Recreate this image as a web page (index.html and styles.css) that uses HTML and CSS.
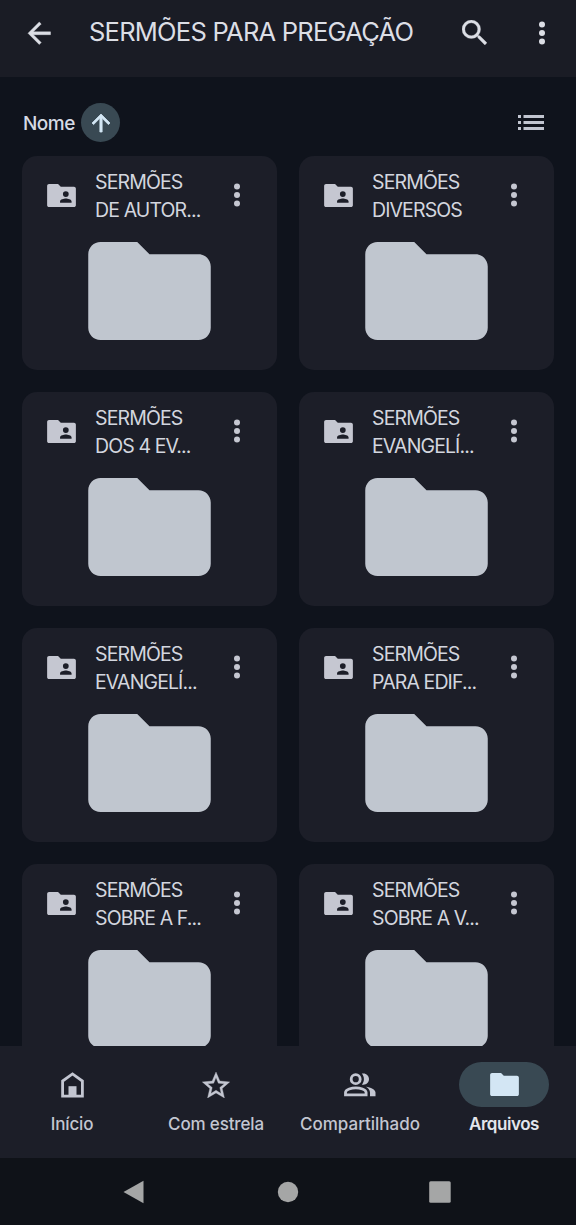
FILE: index.html
```
<!DOCTYPE html>
<html lang="pt-BR">
<head>
<meta charset="utf-8">
<title>Sermões para pregação</title>
<link rel="stylesheet" href="styles.css">
</head>
<body>
<svg class="defs" width="0" height="0" aria-hidden="true">
  <symbol id="folder" viewBox="2 4 20 16"><path d="M10 4H4C2.9 4 2 4.9 2 6v12c0 1.1.9 2 2 2h16c1.1 0 2-.9 2-2V8c0-1.1-.9-2-2-2h-8z"/></symbol>
  <symbol id="shared" viewBox="2 4 20 16"><path fill-rule="evenodd" d="M9.6 4H3.3C2.6 4 2 4.6 2 5.3v13.4c0 .7.6 1.3 1.3 1.3h17.4c.7 0 1.3-.6 1.3-1.3V7.2c0-.7-.6-1.3-1.3-1.3h-9.2zM15 9a2 2 0 1 1 0 4 2 2 0 0 1 0-4zm4 8h-8v-1c0-1.33 2.67-2 4-2s4 .67 4 2z"/></symbol>
  <symbol id="dots" viewBox="0 0 8 24"><circle cx="4" cy="3.5" r="3"/><circle cx="4" cy="12" r="3"/><circle cx="4" cy="20.5" r="3"/></symbol>
</svg>
<div class="app">
  <header class="topbar">
    <svg class="back" viewBox="4 4 16 16"><path d="M20 11H7.83l5.59-5.59L12 4l-8 8 8 8 1.41-1.41L7.83 13H20z"/></svg>
    <h1 class="title">SERMÕES PARA PREGAÇÃO</h1>
    <svg class="search" viewBox="3 3 17.5 17.5"><path d="M15.5 14h-.79l-.28-.27A6.47 6.47 0 0 0 16 9.5 6.5 6.5 0 1 0 9.5 16c1.61 0 3.09-.59 4.23-1.57l.27.28v.79l5 4.99L20.49 19zm-6 0a4.5 4.5 0 1 1 0-9 4.5 4.5 0 0 1 0 9z"/></svg>
    <svg class="dots"><use href="#dots"/></svg>
  </header>
  <main class="content">
    <div class="sort">
      <span class="sort-label">Nome</span>
      <span class="sort-button"><svg class="up" viewBox="4 4 16 16"><path d="m4 12 1.41 1.41L11 7.83V20h2V7.83l5.58 5.59L20 12l-8-8z"/></svg></span>
      <svg class="list" viewBox="0 0 26 15"><path d="M0 0h3v3H0zM5.5 0H26v3H5.5zM0 6h3v3H0zM5.5 6H26v3H5.5zM0 12h3v3H0zM5.5 12H26v3H5.5z"/></svg>
    </div>
    <div class="grid">
      <article class="card"><div class="card-head"><svg class="shared"><use href="#shared"/></svg><p class="name">SERMÕES<br>DE AUTOR...</p><svg class="dots"><use href="#dots"/></svg></div><svg class="folder"><use href="#folder"/></svg></article>
      <article class="card"><div class="card-head"><svg class="shared"><use href="#shared"/></svg><p class="name">SERMÕES<br>DIVERSOS</p><svg class="dots"><use href="#dots"/></svg></div><svg class="folder"><use href="#folder"/></svg></article>
      <article class="card"><div class="card-head"><svg class="shared"><use href="#shared"/></svg><p class="name">SERMÕES<br>DOS 4 EV...</p><svg class="dots"><use href="#dots"/></svg></div><svg class="folder"><use href="#folder"/></svg></article>
      <article class="card"><div class="card-head"><svg class="shared"><use href="#shared"/></svg><p class="name">SERMÕES<br>EVANGELÍ...</p><svg class="dots"><use href="#dots"/></svg></div><svg class="folder"><use href="#folder"/></svg></article>
      <article class="card"><div class="card-head"><svg class="shared"><use href="#shared"/></svg><p class="name">SERMÕES<br>EVANGELÍ...</p><svg class="dots"><use href="#dots"/></svg></div><svg class="folder"><use href="#folder"/></svg></article>
      <article class="card"><div class="card-head"><svg class="shared"><use href="#shared"/></svg><p class="name">SERMÕES<br>PARA EDIF...</p><svg class="dots"><use href="#dots"/></svg></div><svg class="folder"><use href="#folder"/></svg></article>
      <article class="card"><div class="card-head"><svg class="shared"><use href="#shared"/></svg><p class="name">SERMÕES<br>SOBRE A F...</p><svg class="dots"><use href="#dots"/></svg></div><svg class="folder"><use href="#folder"/></svg></article>
      <article class="card"><div class="card-head"><svg class="shared"><use href="#shared"/></svg><p class="name">SERMÕES<br>SOBRE A V...</p><svg class="dots"><use href="#dots"/></svg></div><svg class="folder"><use href="#folder"/></svg></article>
    </div>
  </main>
  <nav class="tabs">
    <a class="tab"><span class="pill"><svg class="home" viewBox="0 0 23 26"><path d="M1.6 24.2V9L11.5 1.9 21.4 9v15.2z" fill="none" stroke="currentColor" stroke-width="2.8"/><path d="M7.5 14.2h8V25h-8z"/></svg></span><span class="tab-label">Início</span></a>
    <a class="tab"><span class="pill"><svg class="star" viewBox="2 2 20 19"><path stroke="currentColor" stroke-width=".25" d="m22 9.24-7.19-.62L12 2 9.19 8.63 2 9.24l5.46 4.73L5.82 21 12 17.27 18.18 21l-1.63-7.03zM12 15.4l-3.76 2.27 1-4.28-3.32-2.88 4.38-.38L12 6.1l1.71 4.04 4.38.38-3.32 2.88 1 4.28z"/></svg></span><span class="tab-label">Com estrela</span></a>
    <a class="tab"><span class="pill"><svg class="people" viewBox="0 0 32 24"><g fill="none" stroke="currentColor" stroke-width="2.8"><circle cx="11.7" cy="6.2" r="4.5"/><path d="M1.5 21.9v-2.3c0-3.2 6.4-4.7 10.3-4.7s10.3 1.5 10.3 4.7v2.3z"/></g><path d="M17.8 11.5c2.8-3.1 2.8-7.6 0-10.9 4-.9 7.2 1.8 7.2 5.5s-3.2 6.4-7.2 5.4zM21.8 13.7c4.9.6 9.7 2.6 9.7 5.9v3.7H26v-3.7c0-2.5-1.7-4.6-4.2-5.9z"/></svg></span><span class="tab-label wide">Compartilhado</span></a>
    <a class="tab active"><span class="pill"><svg class="files" viewBox="2 4 20 16"><path d="M9.6 4H3.3C2.6 4 2 4.6 2 5.3v13.4c0 .7.6 1.3 1.3 1.3h17.4c.7 0 1.3-.6 1.3-1.3V7.2c0-.7-.6-1.3-1.3-1.3h-9.2z"/></svg></span><span class="tab-label">Arquivos</span></a>
  </nav>
  <footer class="system">
    <svg class="sys" viewBox="0 0 22 24"><path d="M.5 12 20.5.7v22.6z"/></svg>
    <svg class="sys" viewBox="0 0 22 24"><circle cx="11" cy="12" r="10.2"/></svg>
    <svg class="sys" viewBox="0 0 22 24"><rect x=".2" y="1.3" width="21.5" height="21.5" rx="1.5"/></svg>
  </footer>
</div>
</body>
</html>
```
FILE: styles.css
```
* { box-sizing: border-box; }
body { margin: 0; background: #0f131c; font-family: Inter, "Liberation Sans", sans-serif; }
svg { display: block; fill: currentColor; flex: none; }
.defs { position: absolute; }
.app { width: 576px; height: 1225px; display: flex; flex-direction: column; overflow: hidden; color: #dcdee5; }

.topbar { height: 77px; flex: none; display: flex; align-items: flex-start; padding: 20px 30px 0 28px; background: #1a1c25; }
.back { width: 22.5px; height: 22.5px; margin-top: 2px; stroke: currentColor; stroke-width: .3; overflow: visible; }
.title { margin: -5px 0 0 38.5px; width: 373px; font-size: 25.5px; line-height: 34px; font-weight: 400; letter-spacing: -.76px; white-space: nowrap; }
.search { width: 25px; height: 25px; stroke: currentColor; stroke-width: .2; }
.topbar .dots { margin: 1px 0 0 51px; }
.dots { width: 8px; height: 24px; }

.content { height: 969px; flex: none; padding: 26px 22px 0; overflow: hidden; }
.sort { height: 40px; display: flex; align-items: center; color: #d5dae4; }
.sort-label { width: 59px; padding-left: 1px; font-size: 19px; font-weight: 500; letter-spacing: -.5px; }
.sort-button { width: 39px; height: 39px; margin-top: -1px; border-radius: 50%; background: #394953; color: #d3e6f4; display: grid; place-items: center; }
.up { width: 18px; height: 18px; stroke: currentColor; stroke-width: .7; overflow: visible; }
.list { width: 26px; height: 15px; margin: -1px 10px 0 auto; color: #c1c5d0; }

.grid { margin-top: 13px; display: grid; grid-template-columns: 255px 255px; gap: 22px; }
.card { height: 214px; border-radius: 15px; background: #1c1e28; padding: 12px 32px 0 25px; color: #c5c7d1; }
.card-head { display: flex; height: 56px; }
.shared { width: 29px; height: 23px; margin-top: 16px; }
.name { margin: 0 0 0 19px; width: 138px; font-size: 19.5px; line-height: 28px; color: #d3d6df; white-space: nowrap; letter-spacing: -.88px; }
.card .dots { margin-top: 15px; }
.folder { width: 123px; height: 98px; margin: 18px 0 0 41px; color: #c0c6cf; }

.tabs { height: 112px; flex: none; display: grid; grid-template-columns: repeat(4, 144px); background: #1c1e28; color: #c3c6d1; }
.tab { display: flex; flex-direction: column; align-items: center; padding-top: 16px; }
.pill { width: 90px; height: 45px; border-radius: 23px; display: grid; place-items: center; }
.active .pill { background: #394953; color: #d3e6f4; }
.home { width: 23px; height: 26px; }
.star { width: 28px; height: 26px; }
.people { width: 32px; height: 24px; }
.files { width: 29px; height: 23px; }
.tab-label { margin-top: 6px; font-size: 17px; line-height: 22px; font-weight: 500; letter-spacing: -.15px; white-space: nowrap; }
.tab-label.wide { letter-spacing: 0; }
.active .tab-label { font-weight: 600; letter-spacing: -.45px; color: #e3e5ec; }

.system { height: 67px; flex: none; display: flex; justify-content: center; align-items: center; gap: 130px; background: #0f1218; color: #a5a6a6; }
.sys { width: 22px; height: 24px; }
.sys:first-child { margin: 0 2px 0 -2px; }
```
